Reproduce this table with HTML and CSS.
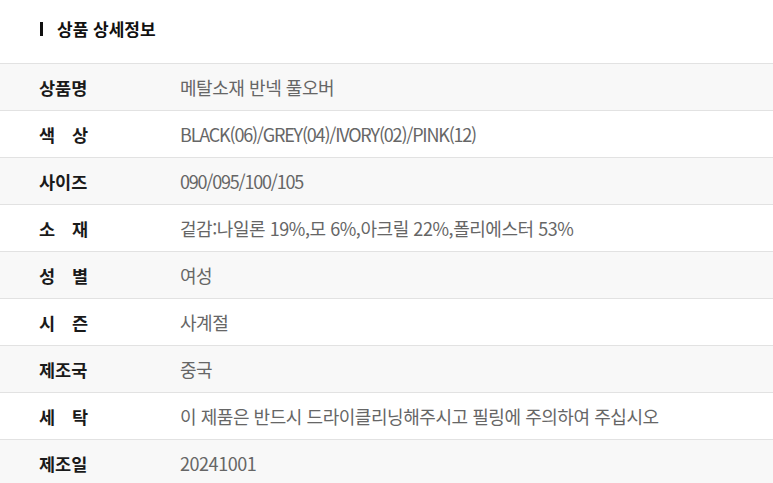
FILE: index.html
```html
<!DOCTYPE html>
<html lang="ko">
<head>
<meta charset="utf-8">
<link rel="stylesheet" href="styles.css">
</head>
<body>
<section class="detail">
  <h2 class="detail-title">상품 상세정보</h2>
  <dl class="spec">
    <div class="spec-row"><dt><span class="lbl">상품명</span></dt><dd>메탈소재 반넥 풀오버</dd></div>
    <div class="spec-row"><dt><span class="lbl">색 상</span></dt><dd class="spec-en">BLACK(06)/GREY(04)/IVORY(02)/PINK(12)</dd></div>
    <div class="spec-row"><dt><span class="lbl">사이즈</span></dt><dd class="spec-en">090/095/100/105</dd></div>
    <div class="spec-row"><dt><span class="lbl">소 재</span></dt><dd>겉감:나일론 19%,모 6%,아크릴 22%,폴리에스터 53%</dd></div>
    <div class="spec-row"><dt><span class="lbl">성 별</span></dt><dd>여성</dd></div>
    <div class="spec-row"><dt><span class="lbl">시 즌</span></dt><dd>사계절</dd></div>
    <div class="spec-row"><dt><span class="lbl">제조국</span></dt><dd>중국</dd></div>
    <div class="spec-row"><dt><span class="lbl">세 탁</span></dt><dd>이 제품은 반드시 드라이클리닝해주시고 필링에 주의하여 주십시오</dd></div>
    <div class="spec-row"><dt><span class="lbl">제조일</span></dt><dd>20241001</dd></div>
  </dl>
</section>
</body>
</html>
```
FILE: styles.css
```css
html, body {
  margin: 0;
  padding: 0;
  background: #fff;
}
body {
  font-family: "Noto Sans CJK KR", "Noto Sans", sans-serif;
  color: #222;
}
.detail-title {
  margin: 0;
  padding: 17px 0 22px 40px;
  display: flex;
  align-items: center;
  line-height: 24px;
  font-size: 17px;
  font-weight: 700;
  color: #111;
}
.detail-title::before {
  content: "";
  width: 3px;
  height: 14px;
  background: #111;
  margin-right: 14px;
}
.spec {
  margin: 0;
  padding: 0;
}
.spec-row {
  display: flex;
  align-items: center;
  height: 47px;
  box-sizing: border-box;
  border-top: 1px solid #e2e2e2;
}
.spec-row:nth-child(odd) {
  background: #f8f8f8;
}
.spec dt {
  width: 180px;
  flex: none;
  box-sizing: border-box;
  padding-left: 39px;
  font-size: 17.5px;
  font-weight: 700;
  color: #1a1a1a;
  white-space: nowrap;
}
.lbl {
  display: inline-block;
  width: 49px;
  white-space: nowrap;
  text-align: justify;
  text-align-last: justify;
}
.spec dd {
  margin: 0;
  font-size: 18px;
  color: #666;
  letter-spacing: -0.45px;
}
.spec dd.spec-en {
  letter-spacing: -1.2px;
}
```
